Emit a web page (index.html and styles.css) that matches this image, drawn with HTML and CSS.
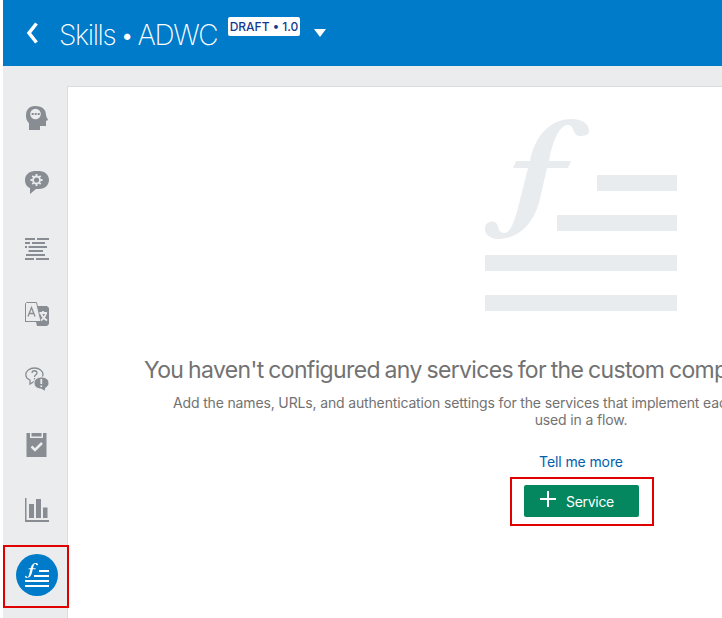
FILE: index.html
```html
<!DOCTYPE html>
<html lang="en">
<head>
<meta charset="utf-8">
<title>Skills • ADWC</title>
<link rel="stylesheet" href="styles.css">
</head>
<body>
<svg class="defs" width="0" height="0" aria-hidden="true">
  <symbol id="service" viewBox="0 0 192 192">
    <path d="M104 13c0-8-6-13-18-13C66 0 50 16 45 42H31l-3 7h15L33 89c-5 19-9 25-14 25-5-1-5-3-6-7-2-6-11-6-13 1-1 7 5 12 14 12 20-1 35-15 41-40L62 49h21l3-7H64c4-22 11-35 18-36 8-1 5 11 13 11 5 0 8-1 9-4z"/>
    <path d="M112 56h80v16h-80zM72 96h120v16H72zM0 136h192v16H0zM0 176h192v16H0z"/>
  </symbol>
</svg>
<div class="app">
  <header class="header">
    <svg class="back" viewBox="0 0 14 22"><path d="M11.500 1.500 4 11l7.500 9.500"/></svg>
    <h1 class="title">Skills • ADWC</h1>
    <span class="version">DRAFT • 1.0</span>
    <svg class="caret" viewBox="0 0 12 8"><path d="M0 0h12L6 8z"/></svg>
  </header>
  <div class="body">
    <nav class="nav">
      <div class="item"><svg class="icon" viewBox="0 0 24 24"><path d="M10 0c8 0 11 4 11 9 0 2 2 4 2 5l-2 1v5h-6v4H4v-7C1 14 1 11 1 9 1 4 4 0 10 0z"/><circle class="cut" cx="10.500" cy="8" r="5.300"/><path d="M6.700 7h2v2h-2zm3 0h2v2h-2zm3 0h2v2h-2z"/></svg></div>
      <div class="item"><svg class="icon" viewBox="0 0 24 24"><path d="M10 0h4c6 0 10 4 10 9s-4 9-10 9h-3l-6 5v-6C2 16 0 13 0 9c0-5 4-9 10-9z"/><circle class="cut-line" cx="11.500" cy="9" r="3.500"/><path class="cut-line" d="M11.500 3v2m0 8v2M5.500 9h2m8 0h2M7.300 4.800l1.400 1.400m5.600 5.600 1.400 1.400M7.300 13.200l1.400-1.400m5.600-5.600 1.400-1.400"/></svg></div>
      <div class="item"><svg class="icon" viewBox="0 0 24 24"><path d="M0 1h10v2H0zm12 0h12v2H12zM0 5h5v2H0zm7 0h13v2H7zM0 9h2v2H0zm3.500 0H22v2H3.500zM3.500 13H18v2H3.500zM1 17h19v2H1zm-1 4h9v2H0zm11 0h13v2H11z"/></svg></div>
      <div class="item"><svg class="icon" viewBox="0 0 24 24"><path d="M12 4h10l2 2v16l-2 2H12z"/><path class="paper" d="M.5 20V1.500L1.500.5h10L16 19.500H.5z"/><path class="line" d="M3 14.500 6.500 5.500l3.500 9M4.300 11.500h4.500"/><path class="cut-line" d="M14.500 11H22m-4-2v2m3 0c-.5 4-3 6-5 7.500m0-7c1 3 3 5 6 7"/><path d="M11 20h6l-3 4h-2z"/></svg></div>
      <div class="item"><svg class="icon" viewBox="0 0 24 24"><path class="line" d="M9.500 1C14.500 1 18 4 18 7.500S14.500 14 10 14l-5 3v-4C2.500 12 .8 10 .8 7.500.8 4 4.500 1 9.500 1z"/><path class="line" d="M7 6c0-3 5-3 5 0 0 1.800-2.500 1.800-2.500 4M9.500 11v1.500"/><path class="edge" d="M16.500 10c4.500 0 7.500 2.800 7.500 6 0 2.300-1.500 4-3.500 5v3.500L16 22c-4.500 0-7-3-7-6s3-6 7.500-6z"/><path class="cut-line" d="M16.300 12v5m0 1.500v1.500"/></svg></div>
      <div class="item"><svg class="icon" viewBox="0 0 24 24"><path d="M1.500 0H5v5h13V0h3.500v24h-20z"/><path d="M6.500 0h10v3.500h-10z"/><path class="check" d="m6.500 13.500 3.500 3.500 7-7"/></svg></div>
      <div class="item"><svg class="icon" viewBox="0 0 24 24"><path d="M0 0h1.500v22H24v2H0zM4 6h5v14H4zm7-5h5v19h-5zm7 8.500h4.500V20H18z"/></svg></div>
      <div class="item selected"><span class="disc"><svg class="glyph"><use href="#service"/></svg></span></div>
    </nav>
    <main class="panel">
      <div class="empty">
        <svg class="art"><use href="#service"/></svg>
        <h2 class="heading">You haven't configured any services for the custom comp</h2>
        <p class="text">Add the names, URLs, and authentication settings for the services that implement eac</p>
        <p class="text last">used in a flow.</p>
        <a class="more">Tell me more</a>
        <div class="highlight">
          <button class="add"><svg class="plus" viewBox="0 0 16 16"><path d="M8 0v16M0 8h16"/></svg><span>Service</span></button>
        </div>
      </div>
    </main>
  </div>
</div>
</body>
</html>
```

FILE: styles.css
```css
* { box-sizing: border-box; }
body { margin: 0; background: #fff; font-family: Inter, "Liberation Sans", sans-serif; }
h1, h2, p { margin: 0; font-weight: 400; white-space: nowrap; }
svg { display: block; flex: none; }
.defs { position: absolute; }
.app { height: 618px; margin-left: 3px; display: flex; flex-direction: column; overflow: hidden; background: #ebecee; }
.header { height: 66px; flex: none; display: flex; align-items: flex-start; background: #007bc9; color: #fff; }
.back { width: 14px; height: 22px; margin: 22px 0 0 22px; fill: none; stroke: #fff; stroke-width: 3.500; }
.title { width: 169px; margin: 17px 0 0 20px; font-size: 28px; line-height: 36px; font-weight: 200; letter-spacing: -1.400px; word-spacing: -2.500px; }
.version { width: 72px; height: 19px; margin-top: 17px; border-radius: 2px; background: #fff; color: #123a93; font-size: 12px; line-height: 20px; font-weight: 500; text-align: center; white-space: nowrap; }
.caret { width: 12px; height: 8px; margin: 29px 0 0 14px; fill: #fff; }
.body { flex: 1; display: flex; min-height: 0; }
.nav { width: 64px; flex: none; padding-top: 20px; }
.item { width: 66px; height: 65.300px; display: flex; align-items: center; justify-content: center; }
.icon { width: 24px; height: 24px; fill: #878d92; margin: 0 0 1px 1px; }
.icon .cut { fill: #ebecee; }
.icon .cut-line { fill: none; stroke: #ebecee; stroke-width: 1.800; }
.icon .paper { fill: #ebecee; stroke: #878d92; }
.icon .line { fill: none; stroke: #878d92; stroke-width: 1.300; }
.icon .edge { stroke: #ebecee; stroke-width: 1; }
.icon .check { fill: none; stroke: #ebecee; stroke-width: 2.500; }
.selected { position: relative; z-index: 1; height: 63px; margin-top: 2px; border: 2px solid #e00000; }
.disc { width: 42px; height: 42px; margin: 0 0 3px 2px; display: flex; align-items: center; justify-content: center; border-radius: 50%; background: #007bc9; }
.glyph { width: 24px; height: 24px; fill: #fff; }
.panel { flex: 1; min-width: 0; margin-top: 20px; overflow: hidden; border: solid #d7dee3; border-width: 1px 0 0 1px; background: #fff; }
.empty { width: 1026px; padding-top: 32px; display: flex; flex-direction: column; align-items: center; color: #727272; }
.art { width: 192px; height: 192px; fill: #e8ecef; }
.heading { width: 874px; margin-top: 44px; font-size: 23px; line-height: 30px; letter-spacing: -0.650px; word-spacing: -1.100px; }
.text { width: 816px; margin-top: 9px; font-size: 14px; line-height: 17px; letter-spacing: -0.150px; }
.last { width: auto; margin-top: 0; }
.more { margin-top: 25px; font-size: 14px; line-height: 18px; letter-spacing: -0.100px; color: #0060ad; }
.highlight { width: 144px; height: 49px; margin: 6px 0 0 2px; padding: 6px 13px 7px 12px; border: 2px solid #e00000; }
.add { width: 115px; height: 32px; padding: 0 0 0 16px; display: flex; align-items: center; gap: 10px; border: 0; border-radius: 2px; background: #04875f; color: #fff; font: 14px/18px Inter, "Liberation Sans", sans-serif; letter-spacing: -0.300px; }
.plus { width: 16px; height: 16px; margin-bottom: 5px; fill: none; stroke: #fff; stroke-width: 2; }
.add span { margin-top: 2px; }
```
